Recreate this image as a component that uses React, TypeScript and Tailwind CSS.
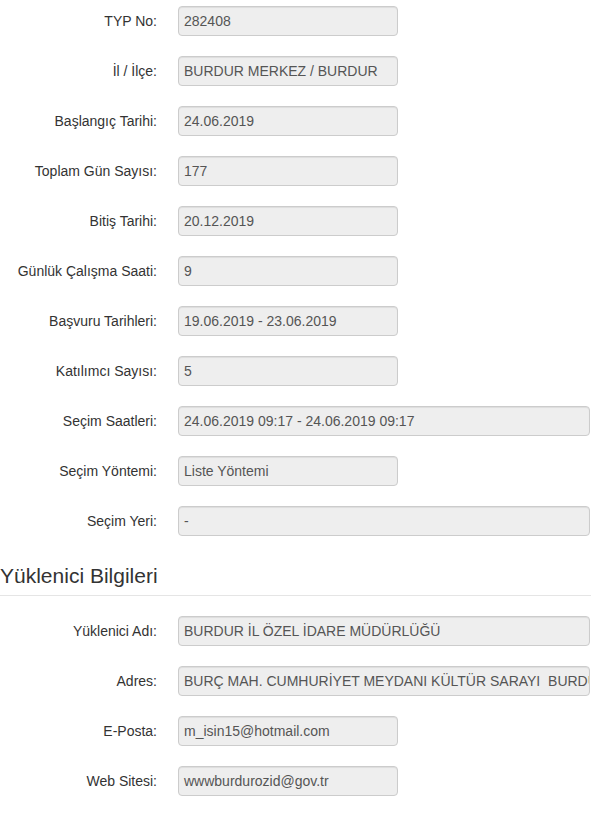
type Field = { label: string; value: string; wide?: boolean };

const project: Field[] = [
  { label: 'TYP No:', value: '282408' },
  { label: 'İl / İlçe:', value: 'BURDUR MERKEZ / BURDUR' },
  { label: 'Başlangıç Tarihi:', value: '24.06.2019' },
  { label: 'Toplam Gün Sayısı:', value: '177' },
  { label: 'Bitiş Tarihi:', value: '20.12.2019' },
  { label: 'Günlük Çalışma Saati:', value: '9' },
  { label: 'Başvuru Tarihleri:', value: '19.06.2019 - 23.06.2019' },
  { label: 'Katılımcı Sayısı:', value: '5' },
  { label: 'Seçim Saatleri:', value: '24.06.2019 09:17 - 24.06.2019 09:17', wide: true },
  { label: 'Seçim Yöntemi:', value: 'Liste Yöntemi' },
  { label: 'Seçim Yeri:', value: '-', wide: true },
];

const contractor: Field[] = [
  { label: 'Yüklenici Adı:', value: 'BURDUR İL ÖZEL İDARE MÜDÜRLÜĞÜ', wide: true },
  { label: 'Adres:', value: 'BURÇ MAH. CUMHURİYET MEYDANI KÜLTÜR SARAYI  BURDUR', wide: true },
  { label: 'E-Posta:', value: 'm_isin15@hotmail.com' },
  { label: 'Web Sitesi:', value: 'wwwburdurozid@gov.tr' },
];

function Row({ label, value, wide }: Field) {
  return (
    <div className="flex items-center gap-[21px]">
      <label className="w-[157px] shrink-0 text-right text-[14px] text-[#333]">{label}</label>
      <div
        className={`h-[30px] ${wide ? 'w-[412px]' : 'w-[220px]'} overflow-hidden whitespace-pre rounded-[4px] border border-[#ccc] bg-[#eee] px-[5px] text-[14px] leading-[28px] text-[#555] shadow-[inset_0_1px_1px_rgba(0,0,0,0.075)]`}
      >
        {value}
      </div>
    </div>
  );
}

export default function App() {
  return (
    <div className="w-[591px] bg-white pt-[6px] font-['Liberation_Sans',Arial,sans-serif]">
      <div className="flex flex-col gap-[20px]">
        {project.map((f) => (
          <Row key={f.label} {...f} />
        ))}
      </div>
      <div className="mt-[25px] border-b border-[#e5e5e5] pb-[4px] text-[21px] leading-[30px] text-[#333]">
        Yüklenici Bilgileri
      </div>
      <div className="mt-[20px] flex flex-col gap-[20px] pb-[25px]">
        {contractor.map((f) => (
          <Row key={f.label} {...f} />
        ))}
      </div>
    </div>
  );
}
